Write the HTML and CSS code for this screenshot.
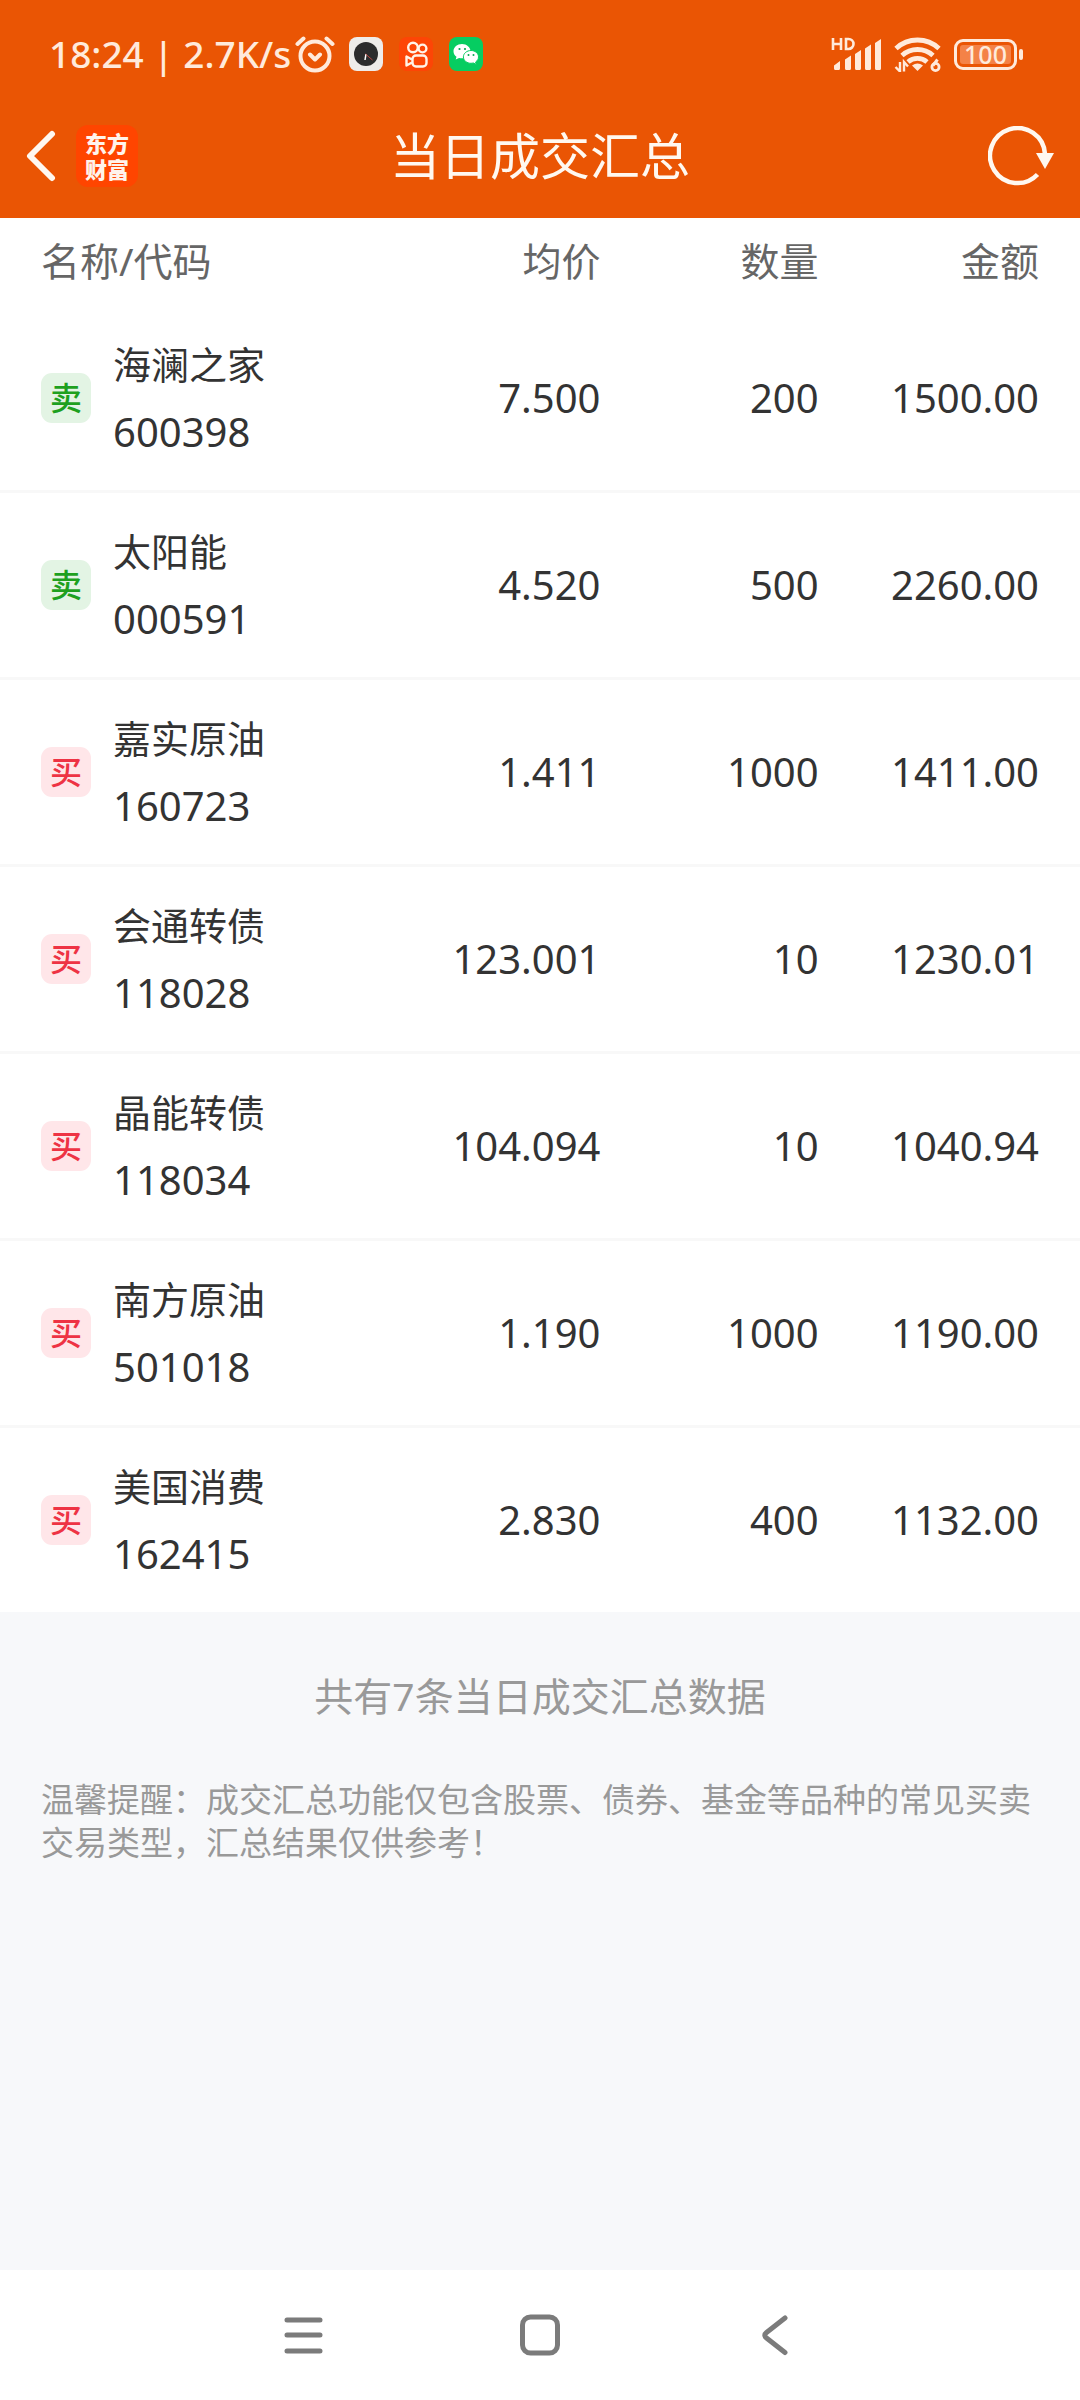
FILE: index.html
```html
<!DOCTYPE html>
<html lang="zh-CN">
<head>
<meta charset="utf-8">
<meta name="viewport" content="width=device-width, initial-scale=1">
<title>当日成交汇总</title>
<link rel="stylesheet" href="styles.css">
</head>
<body>
<header class="top">
  <div class="status">
    <div class="status-left">
      <span class="clock">18:24 | 2.7K/s</span>
      <svg class="alarm" width="40" height="38" viewBox="0 0 40 38" fill="none" stroke="#ffeadb" stroke-width="4" stroke-linecap="round" stroke-linejoin="round" aria-hidden="true">
        <circle cx="20" cy="21" r="14.5"/><path d="M15 19.5l5 5 5-5M2.500 9l6-5.500M37.500 9l-6-5.500"/>
      </svg>
      <div class="apps">
        <svg width="34" height="34" viewBox="0 0 34 34" aria-hidden="true">
          <rect width="34" height="34" rx="8" fill="#eeecea"/><circle cx="17" cy="17" r="12" fill="#2c2c2d"/>
          <path d="M17 17l-1 6" stroke="#fff" stroke-width="1.500"/><path d="M16.500 17l7 6" stroke="#b8443c" stroke-width="1"/>
        </svg>
        <svg width="34" height="34" viewBox="0 0 34 34" fill="none" stroke="#fff3e8" stroke-width="2.400" stroke-linejoin="round" aria-hidden="true">
          <rect width="34" height="34" rx="8" fill="#fd4506" stroke="none"/>
          <circle cx="14" cy="10.500" r="4.800"/><circle cx="23.500" cy="11.500" r="3.900"/><rect x="13.500" y="18.500" width="14" height="11" rx="3.500"/><path d="M13 22.500l-5.500-3v9l5.500-3"/>
        </svg>
        <svg width="34" height="34" viewBox="0 0 34 34" aria-hidden="true">
          <rect width="34" height="34" rx="8" fill="#06cd61"/>
          <path d="M13 7c-4.800 0-8.500 3.200-8.500 7.200 0 2.300 1.200 4.200 3 5.500l-.8 2.900 3.400-1.700c1 .3 1.900.4 2.900.4 4.700 0 8.500-3.200 8.500-7.100S17.700 7 13 7z" fill="#fff"/>
          <path d="M22 13.500c-4.200 0-7.600 2.900-7.600 6.400s3.400 6.400 7.600 6.400c.9 0 1.700-.1 2.500-.3l2.800 1.500-.7-2.500c1.800-1.200 2.900-3 2.900-5.100 0-3.500-3.300-6.400-7.500-6.400z" fill="#fff" stroke="#06cd61" stroke-width="1"/>
          <g fill="#06a850"><circle cx="10.500" cy="12" r="1.100"/><circle cx="16" cy="12" r="1.100"/><circle cx="19.500" cy="18" r="1"/><circle cx="24.500" cy="18" r="1"/></g>
        </svg>
      </div>
    </div>
    <div class="status-right">
      <svg width="51" height="36" viewBox="0 0 51 36" fill="#ffeadb" aria-hidden="true">
        <path d="M2 2v12M10 2v12M2 8h8M15 3v10h2.500a5 5 0 0 0 0-10z" fill="none" stroke="#ffeadb" stroke-width="2.600"/>
        <path d="M3 29.500l6-4.500v7.500a1.500 1.500 0 0 1-1.500 1.500h-3A1.500 1.500 0 0 1 3 32.500zM14 23.500l6-4v13a1.500 1.500 0 0 1-1.500 1.500h-3a1.500 1.500 0 0 1-1.500-1.500zM24 18l6-4v18.500a1.500 1.500 0 0 1-1.500 1.500h-3a1.500 1.500 0 0 1-1.500-1.500zM34 12.500l6-4v24a1.500 1.500 0 0 1-1.500 1.500h-3a1.500 1.500 0 0 1-1.500-1.500zM44 7l6-4v29.500a1.500 1.500 0 0 1-1.500 1.500h-3a1.500 1.500 0 0 1-1.500-1.500z"/>
      </svg>
      <svg width="48" height="36" viewBox="0 0 48 36" fill="none" stroke="#ffeadb" stroke-width="4.800" aria-hidden="true">
        <path d="M2 12.500a31.500 31.500 0 0 1 43 0M8 19.500a23 23 0 0 1 31 0M14 26a14.500 14.500 0 0 1 19 0"/>
        <path d="M18 29.500q5.500-4 11 0L23.500 35z" fill="#ffeadb" stroke="none"/>
        <path d="M6 26v9.500L1.500 31M10 35.500V26l4 4.500" stroke-width="2.400"/>
        <path d="M43.500 23.500l-4.500 6" stroke-width="3"/><circle cx="41.500" cy="31" r="3.600" stroke-width="2.800"/>
      </svg>
      <div class="battery"><span class="charge">100</span></div>
    </div>
  </div>
  <nav class="bar">
    <div class="bar-side">
      <button class="icon-button" type="button" aria-label="返回">
        <svg width="32" height="52" viewBox="0 0 32 52" fill="none" stroke="#fff8f0" stroke-width="6" stroke-linecap="round" stroke-linejoin="round"><path d="M26 4L4 26l22 22"/></svg>
      </button>
      <a class="logo" href="#">东方<br>财富</a>
    </div>
    <h1 class="title">当日成交汇总</h1>
    <div class="bar-side bar-end">
      <button class="icon-button" type="button" aria-label="刷新">
        <svg width="66" height="60" viewBox="0 0 66 60" fill="none" stroke="#fff8f0" stroke-width="4.500"><path d="M57 28A27.500 27.500 0 1 0 49.500 48.500"/><path d="M48 27h18L57 43z" fill="#fff8f0" stroke="none"/></svg>
      </button>
    </div>
  </nav>
</header>
<main class="main">
  <table class="deals">
    <colgroup><col class="col-name"><col class="col-num"><col class="col-num"><col></colgroup>
    <thead><tr><th scope="col">名称/代码</th><th scope="col">均价</th><th scope="col">数量</th><th scope="col">金额</th></tr></thead>
    <tbody>
      <tr><th scope="row"><div class="stock"><span class="badge sell">卖</span><div class="label"><span>海澜之家</span><span class="code">600398</span></div></div></th><td>7.500</td><td>200</td><td>1500.00</td></tr>
      <tr><th scope="row"><div class="stock"><span class="badge sell">卖</span><div class="label"><span>太阳能</span><span class="code">000591</span></div></div></th><td>4.520</td><td>500</td><td>2260.00</td></tr>
      <tr><th scope="row"><div class="stock"><span class="badge buy">买</span><div class="label"><span>嘉实原油</span><span class="code">160723</span></div></div></th><td>1.411</td><td>1000</td><td>1411.00</td></tr>
      <tr><th scope="row"><div class="stock"><span class="badge buy">买</span><div class="label"><span>会通转债</span><span class="code">118028</span></div></div></th><td>123.001</td><td>10</td><td>1230.01</td></tr>
      <tr><th scope="row"><div class="stock"><span class="badge buy">买</span><div class="label"><span>晶能转债</span><span class="code">118034</span></div></div></th><td>104.094</td><td>10</td><td>1040.94</td></tr>
      <tr><th scope="row"><div class="stock"><span class="badge buy">买</span><div class="label"><span>南方原油</span><span class="code">501018</span></div></div></th><td>1.190</td><td>1000</td><td>1190.00</td></tr>
      <tr><th scope="row"><div class="stock"><span class="badge buy">买</span><div class="label"><span>美国消费</span><span class="code">162415</span></div></div></th><td>2.830</td><td>400</td><td>1132.00</td></tr>
    </tbody>
  </table>
  <p class="total">共有7条当日成交汇总数据</p>
  <p class="note">温馨提醒：成交汇总功能仅包含股票、债券、基金等品种的常见买卖交易类型，汇总结果仅供参考！</p>
</main>
<footer class="system">
  <button class="icon-button" type="button" aria-label="最近任务">
    <svg width="40" height="42" viewBox="0 0 40 42" stroke="#7b7b7b" stroke-width="5" stroke-linecap="round"><path d="M3 6h33M3 21h33M3 37h33"/></svg>
  </button>
  <button class="icon-button" type="button" aria-label="主屏幕">
    <svg width="40" height="42" viewBox="0 0 40 42" fill="none" stroke="#7b7b7b" stroke-width="5"><rect x="2.500" y="3" width="35" height="36" rx="8"/></svg>
  </button>
  <button class="icon-button" type="button" aria-label="后退">
    <svg width="40" height="42" viewBox="0 0 40 42" fill="none" stroke="#7b7b7b" stroke-width="5" stroke-linecap="round" stroke-linejoin="round"><path d="M29 4L10.500 18.500q-3.500 2.700 0 5.500L29 38.500"/></svg>
  </button>
</footer>
</body>
</html>
```
FILE: styles.css
```css
* { box-sizing: border-box; }

body {
  margin: 0;
  min-height: 100vh;
  display: flex;
  flex-direction: column;
  background: #f7f8fa;
  color: #333;
  font-family: "Noto Sans", "Noto Sans CJK SC", sans-serif;
}

svg { display: block; }

.top { background: #ea5504; color: #fff8f0; }

.status {
  height: 96px;
  padding: 12px 63px 0 49px;
  display: flex;
  justify-content: space-between;
  align-items: center;
  color: #ffeadb;
}
.status-left, .status-right, .apps { display: flex; align-items: center; }
.clock { font-size: 37px; font-weight: 500; line-height: 48px; white-space: pre; }
.alarm { margin: 0 14px 0 4px; }
.apps { gap: 16px; }
.status-right { gap: 12px; }

.battery {
  position: relative;
  width: 63px;
  height: 31px;
  padding: 3px;
  border: 3px solid #ffeadb;
  border-radius: 9px;
}
.battery::after {
  content: "";
  position: absolute;
  top: 7px;
  right: -9px;
  width: 4px;
  height: 11px;
  border-radius: 2px;
  background: #ffeadb;
}
.charge {
  display: block;
  border-radius: 3px;
  background: #f48247;
  font-size: 25px;
  font-weight: 500;
  line-height: 19px;
  text-align: center;
}

.bar { height: 122px; padding: 0 26px 2px; display: flex; align-items: center; }
.bar-side { flex: 1; display: flex; align-items: center; gap: 18px; }
.bar-end { justify-content: flex-end; }
.icon-button { padding: 0; border: 0; background: none; }
.logo {
  padding: 5px 9px;
  border-radius: 12px;
  background: #ff4500;
  color: #fff4ec;
  font-size: 22px;
  font-weight: 900;
  line-height: 26px;
  text-decoration: none;
}
.title { margin: 0; font-size: 50px; font-weight: 400; line-height: 64px; }

.main { flex: 1; }

.deals {
  width: 100%;
  table-layout: fixed;
  border-collapse: collapse;
  background: #fff;
  text-align: right;
}
.col-name { width: 35.400%; }
.col-num { width: 20.200%; }
.deals th, .deals td { padding: 0; font-weight: 400; }
.deals th:first-child { padding-left: 41px; text-align: left; }
.deals tr > :last-child { padding-right: 41px; }
.deals thead th { height: 88px; padding-bottom: 2px; color: #666; font-size: 39px; line-height: 56px; }
.deals tbody td { padding-bottom: 2px; font-size: 40px; }
.deals tbody tr + tr { border-top: 3px solid #f8f8f8; }

.stock { padding: 24px 0; display: flex; align-items: center; gap: 22px; }
.label { display: flex; flex-direction: column; font-size: 38px; line-height: 68px; }
.code { font-size: 40px; }
.badge {
  width: 50px;
  height: 50px;
  border-radius: 11px;
  font-size: 32px;
  font-weight: 500;
  line-height: 50px;
  text-align: center;
}
.sell { background: #e3f4e4; color: #1ea01e; }
.buy { background: #ffe6e9; color: #ee3344; }

.total, .note { margin: 0; color: #999; }
.total { padding-top: 56px; font-size: 39px; line-height: 56px; text-align: center; }
.note { padding: 54px 41px; font-size: 33px; line-height: 43px; }

.system {
  height: 130px;
  display: flex;
  justify-content: center;
  align-items: center;
  gap: 196px;
  background: #fff;
}
```
